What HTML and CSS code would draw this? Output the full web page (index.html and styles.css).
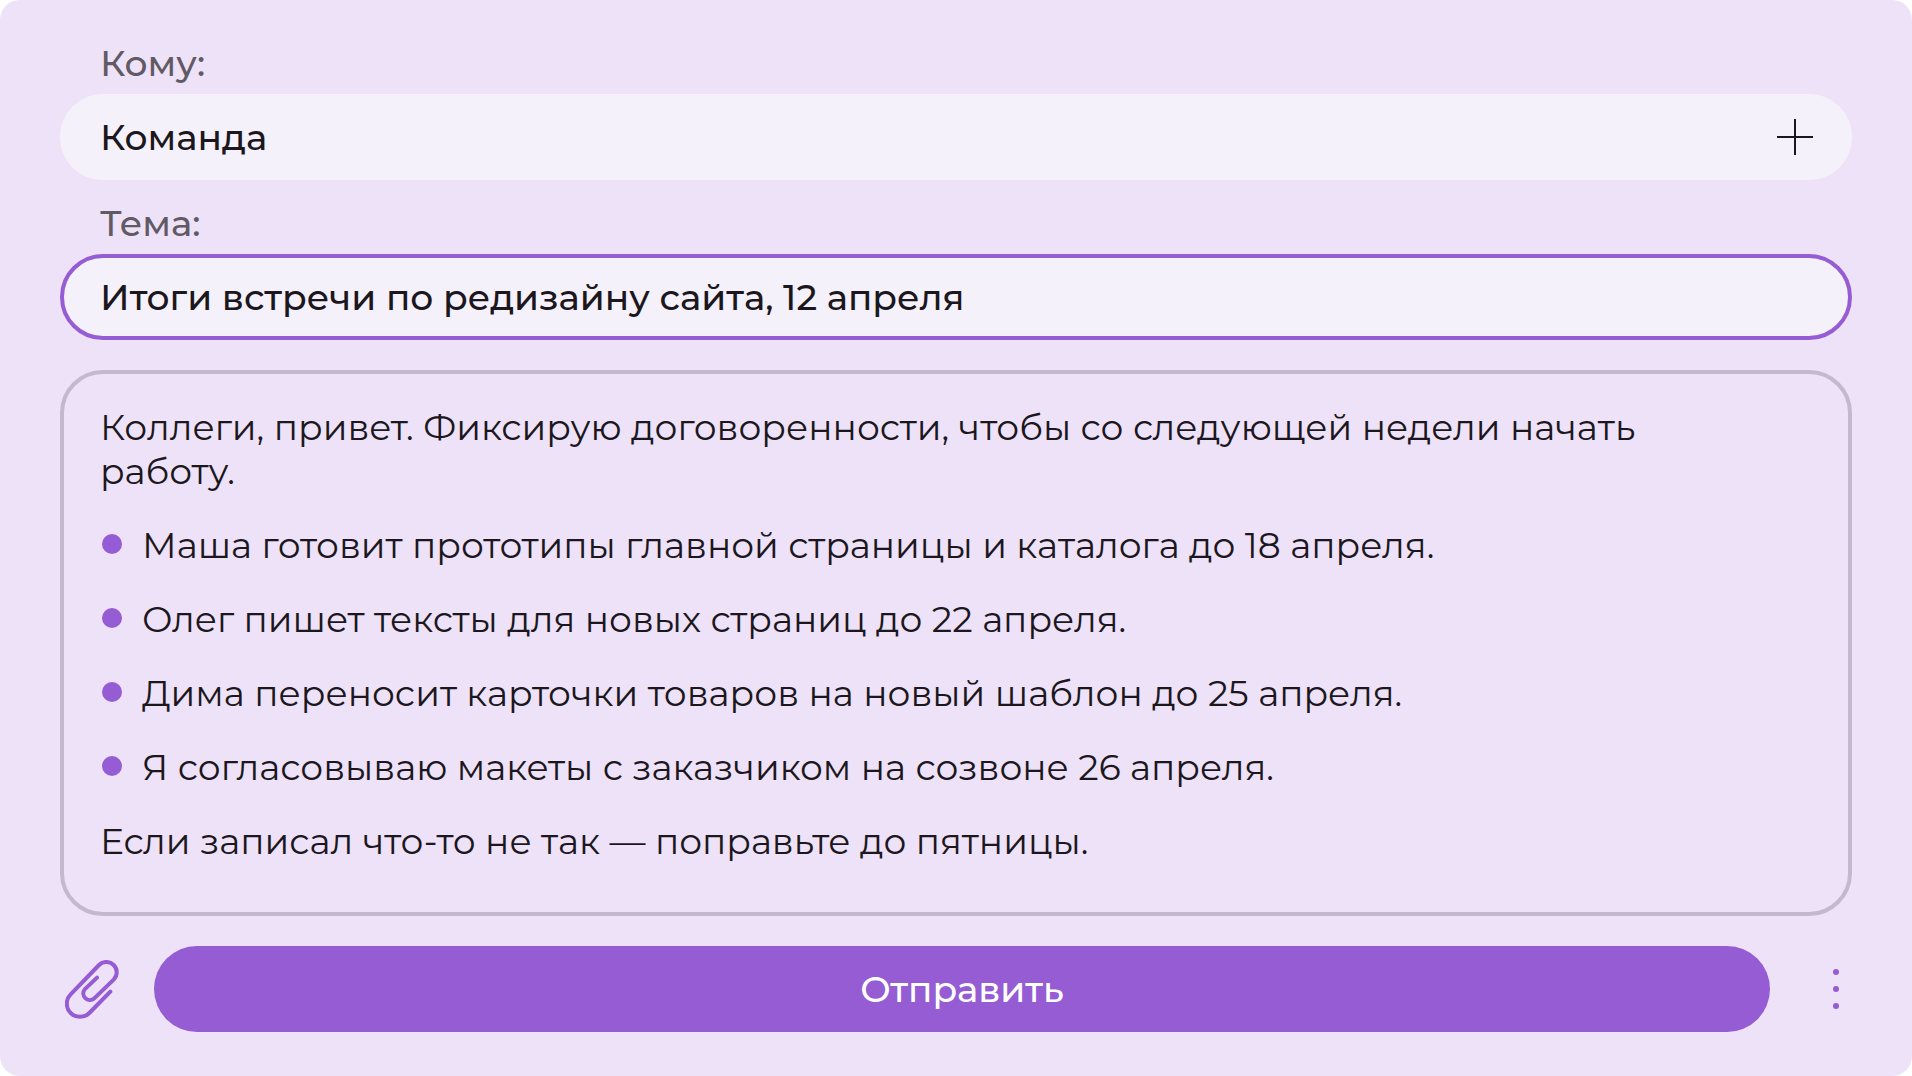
FILE: index.html
```html
<!DOCTYPE html>
<html lang="ru">
<head>
<meta charset="utf-8">
<meta name="viewport" content="width=device-width, initial-scale=1">
<title>Новое письмо</title>
<link rel="stylesheet" href="styles.css">
</head>
<body>
<form class="composer">
  <label class="label" for="to">Кому:</label>
  <div class="field">
    <input class="field-input" id="to" type="text" value="Команда">
    <button class="icon-button" type="button" aria-label="Добавить получателя">
      <svg class="icon-plus" viewBox="0 0 36 36" aria-hidden="true"><path d="M18 0v36M0 18h36"/></svg>
    </button>
  </div>
  <label class="label" for="subject">Тема:</label>
  <div class="field field-active">
    <input class="field-input" id="subject" type="text" value="Итоги встречи по редизайну сайта, 12 апреля">
  </div>
  <div class="message" role="textbox" aria-multiline="true" aria-label="Текст письма" contenteditable="true" spellcheck="false">
    <p>Коллеги, привет. Фиксирую договоренности, чтобы со следующей недели начать работу.</p>
    <ul class="tasks">
      <li>Маша готовит прототипы главной страницы и каталога до 18 апреля.</li>
      <li>Олег пишет тексты для новых страниц до 22 апреля.</li>
      <li>Дима переносит карточки товаров на новый шаблон до 25 апреля.</li>
      <li>Я согласовываю макеты с заказчиком на созвоне 26 апреля.</li>
    </ul>
    <p>Если записал что-то не так — поправьте до пятницы.</p>
  </div>
  <div class="actions">
    <button class="icon-button attach" type="button" aria-label="Прикрепить файл">
      <svg class="icon-clip" viewBox="75 179 162 177" aria-hidden="true"><path d="M211 274L148 338A39 39 0 0 1 92 282L177 194A31 31 0 0 1 221 238L162 295A20 20 0 0 1 134 267L171 232"/></svg>
    </button>
    <button class="send" type="submit">Отправить</button>
    <button class="icon-button more" type="button" aria-label="Ещё">
      <svg class="icon-dots" viewBox="0 0 32 40" aria-hidden="true"><circle cx="16" cy="3" r="3"/><circle cx="16" cy="20" r="3"/><circle cx="16" cy="37" r="3"/></svg>
    </button>
  </div>
</form>
</body>
</html>
```
FILE: styles.css
```css
:root {
  --accent: #955cd4;
  --ink: #1b171d;
  --panel: #eee2f8;
  --field: #f5f1fb;
}

* {
  box-sizing: border-box;
}

body {
  margin: 0;
  background: #fff;
  color: var(--ink);
  font-family: Montserrat, Inter, "Noto Sans", sans-serif;
  font-size: 36px;
  line-height: 44px;
}

.composer {
  display: flex;
  flex-direction: column;
  min-height: 100vh;
  padding: 41px 60px 44px;
  border-radius: 20px;
  background: var(--panel);
}

.label {
  margin-bottom: 9px;
  padding-left: 40px;
  color: #615a64;
  font-weight: 500;
}

.field {
  display: flex;
  align-items: center;
  margin-bottom: 21px;
  padding: 17px 35px 17px 36px;
  border: 4px solid var(--field);
  border-radius: 43px;
  background: var(--field);
}

.field-active {
  margin-bottom: 30px;
  border-color: var(--accent);
}

.field-input {
  flex: 1;
  min-width: 0;
  height: 44px;
  padding: 0;
  border: 0;
  outline: 0;
  background: none;
  color: inherit;
  font: inherit;
  font-weight: 500;
}

.icon-button {
  display: flex;
  align-items: center;
  padding: 0;
  border: 0;
  background: none;
  cursor: pointer;
}

.icon-plus {
  width: 36px;
  height: 36px;
  fill: none;
  stroke: var(--ink);
  stroke-width: 2;
}

.message {
  flex: 1;
  margin-bottom: 30px;
  padding: 31px 72px 49px 36px;
  border: 4px solid #c3b9cc;
  border-radius: 43px;
  outline: 0;
}

.message p {
  margin: 0;
}

.tasks {
  display: grid;
  gap: 30px;
  margin: 30px 0;
  padding: 0;
  list-style: none;
}

.tasks li {
  display: flex;
  gap: 20px;
}

.tasks li::before {
  content: "";
  flex: none;
  width: 20px;
  height: 20px;
  margin: 11px 0 0 2px;
  border-radius: 50%;
  background: var(--accent);
}

.actions {
  display: grid;
  grid-template-columns: 94px 1fr 82px;
}

.attach {
  padding-left: 5px;
}

.icon-clip {
  width: 54px;
  height: 59px;
  fill: none;
  stroke: var(--accent);
  stroke-width: 12;
  stroke-linecap: round;
  stroke-linejoin: round;
}

.send {
  padding: 21px 40px;
  border: 0;
  border-radius: 43px;
  background: var(--accent);
  color: #fff;
  font: inherit;
  font-weight: 500;
  cursor: pointer;
}

.more {
  justify-content: flex-end;
}

.icon-dots {
  width: 32px;
  height: 40px;
  fill: var(--accent);
}
```
